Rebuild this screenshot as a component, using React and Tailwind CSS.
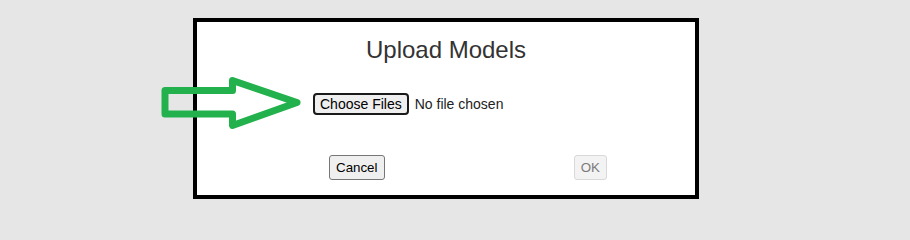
import React from 'react';

const Arrow = () => (
  <svg
    className="absolute left-0 top-0 pointer-events-none"
    width="910"
    height="214"
    viewBox="0 0 910 214"
    fill="none"
  >
    <polygon
      points="165,90.5 232.5,90.5 232.5,80.5 297,102.5 232.5,125.5 232.5,114 165,114"
      stroke="#22b14c"
      strokeWidth="7"
      strokeLinejoin="round"
      fill="none"
    />
  </svg>
);

const App = () => {
  return (
    <div className="relative w-full min-h-screen bg-[#e6e6e6] pt-[18px] pb-[15px] pl-[193px] font-['Liberation_Sans',Arial,sans-serif] overflow-hidden">
      {/* Dialog */}
      <div className="w-[506px] h-[181px] bg-white border-4 border-black flex flex-col">
        <h2 className="pt-[14px] text-center text-[24px] leading-[28px] text-[#333]">Upload Models</h2>

        {/* File picker */}
        <div className="mt-[29px] flex justify-center">
          <div className="w-[266px] flex items-center">
            <span className="h-[22px] px-[5px] border-2 border-[#1a1a1a] rounded-[4px] bg-[#efefef] text-[14px] leading-[14px] text-black flex items-center">
              Choose Files
            </span>
            <span className="ml-[6px] text-[14px] leading-[16px] text-[#222]">No file chosen</span>
          </div>
        </div>

        {/* Buttons */}
        <div className="mt-auto mb-[15px] flex justify-between pl-[132px] pr-[88px]">
          <button className="h-[25px] px-[6px] border border-[#767676] rounded-[3px] bg-[#efefef] text-[13.33px] leading-[15px] text-black">
            Cancel
          </button>
          <button
            disabled
            className="h-[25px] px-[6px] border border-[#d9d9d9] rounded-[3px] bg-[#f3f3f3] text-[13.33px] leading-[15px] text-[#7a7a7a]"
          >
            OK
          </button>
        </div>
      </div>

      <Arrow />
    </div>
  );
};

export default App;
